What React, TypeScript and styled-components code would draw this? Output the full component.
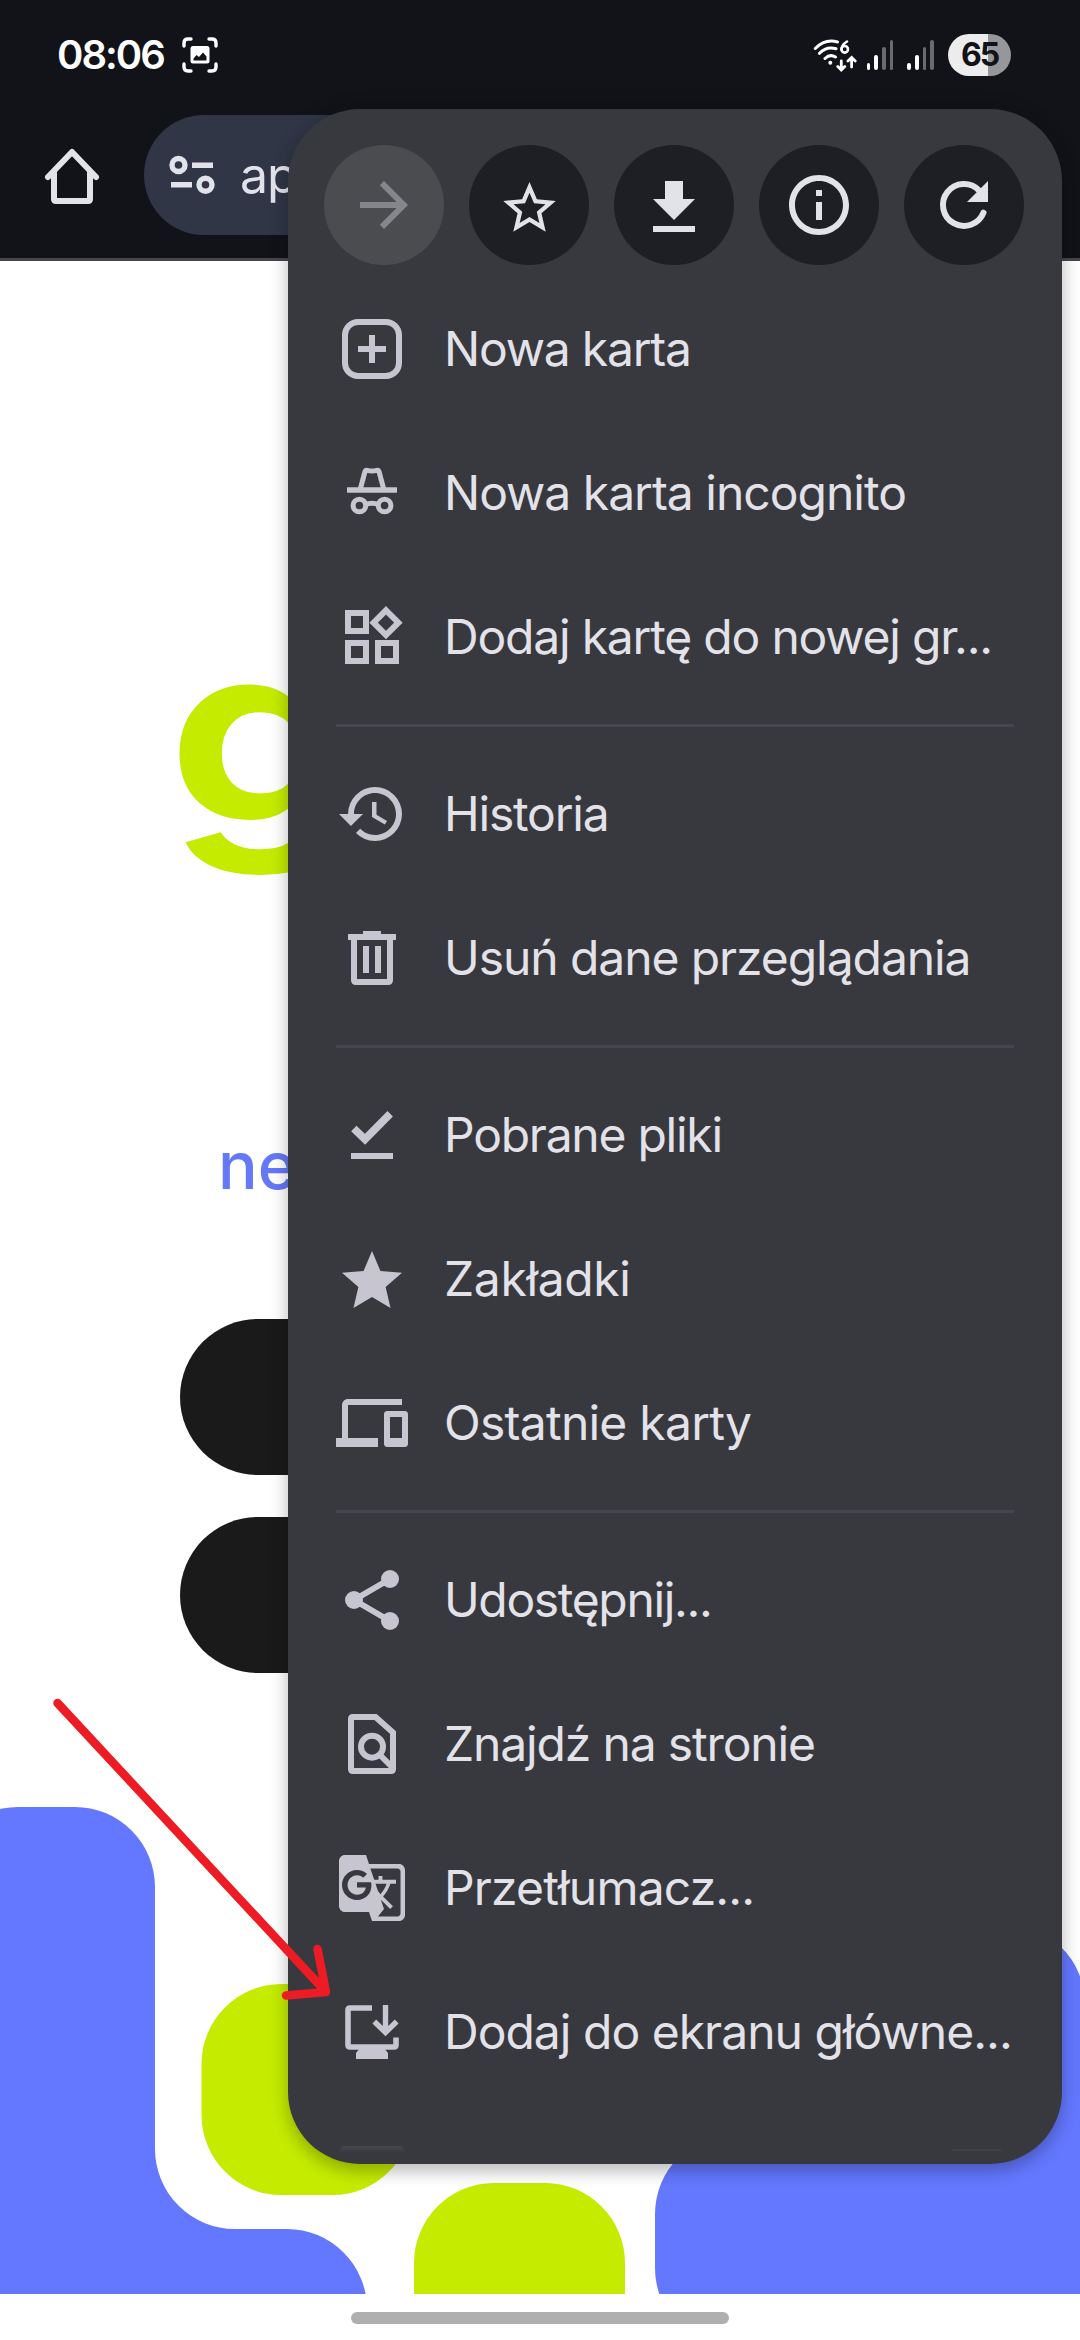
import React from "react";
import styled, { createGlobalStyle } from "styled-components";
import {
  MdArrowForward,
  MdDevices,
  MdGTranslate,
  MdHistory,
  MdInfoOutline,
  MdStar,
  MdStarBorder,
} from "react-icons/md";

const GlobalStyle = createGlobalStyle`
  * { box-sizing: border-box; }
  html, body { margin: 0; padding: 0; background: #fff; }
  body { font-family: Inter, Roboto, "Liberation Sans", sans-serif; overflow: hidden; }
  svg { display: block; flex: none; }
`;

const Screen = styled.div`
  position: relative;
  display: flex;
  flex-direction: column;
  width: 1080px;
  height: 2340px;
  overflow: hidden;
  background: #fff;
`;

/* ---------- status bar ---------- */

const StatusBar = styled.header`
  display: flex;
  align-items: center;
  height: 109px;
  padding: 1px 69px 0 57px;
  background: #121318;
`;

const Clock = styled.span`
  width: 125px;
  color: #fff;
  font-size: 40px;
  font-weight: 600;
  line-height: 48px;
  letter-spacing: -2px;
  white-space: nowrap;
`;

const StatusIcons = styled.div`
  display: flex;
  align-items: center;
  margin-left: auto;
`;

const SignalBars = styled.div`
  display: flex;
  align-items: flex-end;
  gap: 4px;
  height: 30px;
  margin-right: 14px;
`;

const SignalBar = styled.i<{ $height: number; $on: boolean }>`
  width: 3.7px;
  height: ${(p) => p.$height}px;
  border-radius: 2px;
  background: ${(p) => (p.$on ? "#fff" : "#6b6b6f")};
`;

const Battery = styled.div`
  display: flex;
  align-items: center;
  justify-content: center;
  width: 63px;
  height: 42px;
  border-radius: 21px;
  background: linear-gradient(90deg, #ececec 0 40px, #979799 40px);
  color: #121318;
  font-size: 32px;
  font-weight: 700;
  letter-spacing: -2px;
  line-height: 42px;
`;

/* ---------- browser toolbar ---------- */

const Toolbar = styled.div`
  display: flex;
  align-items: center;
  height: 152px;
  padding: 0 120px 17px 36px;
  border-bottom: 3px solid #46464d;
  background: #121318;
`;

const AddressBar = styled.div`
  display: flex;
  align-items: center;
  flex: 1;
  height: 120px;
  margin-left: 36px;
  padding-left: 24px;
  border-radius: 60px;
  background: #303646;
  color: #e2e2ea;
  font-size: 50px;
  line-height: 60px;
`;

const Address = styled.span`
  margin-left: 23px;
  font-weight: 400;
  letter-spacing: -1px;
`;

/* ---------- page behind the menu ---------- */

const WebPage = styled.main`
  display: flex;
  flex-direction: column;
  height: 2033px;
  padding-top: 324px;
  overflow: hidden;
  background: #fff;
`;

const Brand = styled.div`
  height: 441px;
  padding-left: 170px;
  color: #c4eb00;
  font-size: 245px;
  font-weight: 600;
  line-height: 294px;
  transform: scaleX(1.25);
  transform-origin: 180px 0;
  -webkit-text-stroke: 2px #c4eb00;
`;

const Tagline = styled.p`
  height: 292px;
  margin: 0;
  padding: 99px 0 0 218px;
  color: #6478f8;
  font-size: 66px;
  font-weight: 500;
  line-height: 80px;
`;

const StoreLinks = styled.div`
  display: flex;
  flex-direction: column;
  gap: 42px;
  padding: 1px 180px 0;
`;

const StoreLink = styled.div`
  height: 156px;
  border-radius: 78px;
  background: #1a1a1a;
`;

const Artwork = styled.svg`
  margin-top: 134px;
`;

const NavigationBar = styled.footer`
  display: flex;
  justify-content: center;
  height: 46px;
  padding-top: 18px;
  background: #fff;
`;

const GestureHandle = styled.div`
  width: 378px;
  height: 12px;
  border-radius: 6px;
  background: #afafaf;
`;

/* ---------- overflow menu ---------- */

const Menu = styled.nav`
  position: absolute;
  top: 109px;
  left: 288px;
  display: flex;
  flex-direction: column;
  width: 774px;
  height: 2055px;
  padding-top: 36px;
  border-radius: 72px;
  background: #38393e;
  box-shadow: 0 8px 16px rgba(0, 0, 0, 0.22), 0 0 24px rgba(0, 0, 0, 0.08);
`;

const QuickActions = styled.div`
  display: flex;
  justify-content: space-between;
  height: 132px;
  padding: 0 38px 0 36px;
`;

const QuickAction = styled.button<{ $disabled?: boolean }>`
  display: flex;
  align-items: center;
  justify-content: center;
  width: 120px;
  height: 120px;
  padding: 0;
  border: 0;
  border-radius: 50%;
  background: ${(p) => (p.$disabled ? "#4b4c50" : "#1e1f24")};
  color: ${(p) => (p.$disabled ? "#85868b" : "#e2e2e9")};
`;

const MenuRow = styled.div`
  display: flex;
  align-items: center;
  gap: 36px;
  height: 144px;
  padding-left: 48px;
  color: #c6c5d0;
`;

const MenuLabel = styled.span<{ $tracking: number }>`
  color: #e3e2e9;
  font-size: 48px;
  font-weight: 400;
  line-height: 60px;
  letter-spacing: ${(p) => p.$tracking}px;
  white-space: nowrap;
`;

const Divider = styled.hr`
  width: 678px;
  height: 3px;
  margin: 15px 0 15px 48px;
  border: 0;
  background: #46464f;
`;

const NextRow = styled.div`
  display: flex;
  justify-content: space-between;
  align-items: flex-start;
  margin: 42px 60px 0 51px;
`;

const NextIconEdge = styled.div`
  width: 66px;
  height: 6px;
  border-radius: 6px 6px 0 0;
  background: linear-gradient(#494a4f, #38393e);
`;

const NextToggleEdge = styled.div`
  width: 50px;
  height: 2px;
  margin-top: 3px;
  border-radius: 2px;
  background: #3f4045;
`;

const Annotation = styled.svg`
  position: absolute;
  top: 1690px;
  left: 45px;
`;

const Icon = ({ children }: { children: React.ReactNode }) => (
  <svg width="72" height="72" viewBox="0 0 72 72" fill="none" stroke="currentColor" strokeWidth="6">
    {children}
  </svg>
);

const NewTabIcon = () => (
  <Icon>
    <rect x="9" y="9" width="54" height="54" rx="13" />
    <path d="M36 22v28M22 36h28" />
  </Icon>
);

const IncognitoIcon = () => (
  <Icon>
    <path d="M11 33h50" strokeWidth="5.6" />
    <path
      d="M24.3 32l4.7-17.5q.6-1.7 2.3-1.2q4.7 1.4 9.4 0q1.7-.5 2.3 1.2L47.7 32"
      strokeWidth="5"
      strokeLinejoin="round"
    />
    <circle cx="23.4" cy="48.5" r="6.3" strokeWidth="5" />
    <circle cx="48.6" cy="48.5" r="6.3" strokeWidth="5" />
    <path d="M29 48q7-3.5 14 0" strokeWidth="5" />
  </Icon>
);

const TabGroupIcon = () => (
  <Icon>
    <rect x="12" y="12" width="18" height="18" />
    <rect x="12" y="42" width="18" height="18" />
    <rect x="42" y="42" width="18" height="18" />
    <path d="M50 9.3L62.4 21.7L50 34.1L37.6 21.7z" />
  </Icon>
);

const TrashIcon = () => (
  <Icon>
    <path d="M12 15h48" />
    <path d="M27 10.5h18" strokeWidth="3" />
    <path d="M18 15v43q0 2 2 2h32q2 0 2-2V15M30 24v27M42 24v27" />
  </Icon>
);

const DownloadsIcon = () => (
  <Icon>
    <path d="M15 57h42" />
    <path d="M17.8 29.5L29 40.3L54.2 14.8" strokeWidth="7.7" />
  </Icon>
);

const ShareIcon = () => (
  <Icon>
    <path d="M54 15L18 36L54 57" />
    <g fill="currentColor" stroke="none">
      <circle cx="54" cy="15" r="9" />
      <circle cx="18" cy="36" r="9" />
      <circle cx="54" cy="57" r="9" />
    </g>
  </Icon>
);

const FindIcon = () => (
  <Icon>
    <path d="M57 24.5V61q0 2-2 2H17q-2 0-2-2V11q0-2 2-2h22.5z" />
    <circle cx="36" cy="38.7" r="11" />
    <path d="M43.5 46.5L57 60" />
  </Icon>
);

const InstallIcon = () => (
  <Icon>
    <path d="M36 12H14q-2 0-2 2v35q0 2 2 2h44q2 0 2-2v-7.5" strokeWidth="5.6" />
    <path d="M24 52h24l4 5v6H20v-6z" fill="currentColor" stroke="none" />
    <path d="M49.5 9v27M38.3 25.5L49.5 36.5L60.7 25.5" strokeWidth="5.4" />
  </Icon>
);

const DownloadIcon = () => (
  <Icon>
    <path d="M27 12h18v18h12L36 51L15 30h12zM15 57h42v6H15z" fill="currentColor" stroke="none" />
  </Icon>
);

const ReloadIcon = () => (
  <Icon>
    <path d="M55.5 43.7A21 21 0 1 1 51 21.3" strokeLinecap="round" />
    <path d="M60 12v21H39z" fill="currentColor" stroke="none" />
  </Icon>
);

const HomeIcon = () => (
  <svg
    width="72"
    height="72"
    viewBox="0 0 72 72"
    fill="none"
    stroke="#e2e2e9"
    strokeWidth="6"
    strokeLinecap="round"
    strokeLinejoin="round"
  >
    <path d="M12 38L36 13L60 38" />
    <path d="M18 34v26q0 2 2 2h32q2 0 2-2V34" />
  </svg>
);

const SiteSettingsIcon = () => (
  <svg width="49" height="48" viewBox="168 151 49 48" fill="none" stroke="#e2e2ea" strokeWidth="5.4">
    <circle cx="178.5" cy="165" r="6.5" />
    <circle cx="205.5" cy="184.7" r="6.5" />
    <path d="M192 165.3h21M171 184.7h21" />
  </svg>
);

const ScreenshotIcon = () => (
  <svg width="36" height="36" viewBox="0 0 36 36" fill="none" stroke="#fff" strokeWidth="3.4" strokeLinecap="round">
    <path d="M2 9V6q0-4 4-4h3M27 2h3q4 0 4 4v3M34 27v3q0 4-4 4h-3M9 34H6q-4 0-4-4v-3" />
    <rect x="8.5" y="9" width="19" height="17.5" rx="2.5" fill="#fff" stroke="none" />
    <path d="M11.5 23.5v-2l3-3.5 2.5 2 4-4.5 3.5 4v4z" fill="#121318" stroke="none" />
  </svg>
);

const WifiSvg = styled.svg`
  margin-right: 10px;
`;

const WifiIcon = () => (
  <WifiSvg width="44" height="36" viewBox="812 37 44 36" fill="none" stroke="#fff" strokeWidth="3" strokeLinecap="round">
    <path d="M814.3 48.5Q824 38.5 836.5 42M818.5 53.3Q825.5 46 835 48.8M824 58.5Q829 53.6 834.5 57" />
    <circle cx="829.3" cy="62.8" r="2" fill="#fff" stroke="none" />
    <path d="M846 41.5Q840.5 45 840.5 49.5" strokeWidth="2.6" />
    <circle cx="843.7" cy="49.3" r="3.3" strokeWidth="2.6" />
    <path
      d="M840.3 61v8.5M836.8 66.5l3.5 3.5 3.5-3.5M850.6 67v-8.5M847 61l3.6-3.5 3.6 3.5"
      strokeWidth="2.8"
    />
  </WifiSvg>
);

const Signal = () => (
  <SignalBars>
    <SignalBar $height={7} $on />
    <SignalBar $height={15} $on />
    <SignalBar $height={23} $on={false} />
    <SignalBar $height={30} $on={false} />
  </SignalBars>
);

type Item = { label: string; icon: React.ReactNode; tracking: number };

const groups: Item[][] = [
  [
    { label: "Nowa karta", icon: <NewTabIcon />, tracking: -1.2 },
    { label: "Nowa karta incognito", icon: <IncognitoIcon />, tracking: -1.0 },
    { label: "Dodaj kartę do nowej gr...", icon: <TabGroupIcon />, tracking: -1.2 },
  ],
  [
    { label: "Historia", icon: <MdHistory size={72} />, tracking: -1.2 },
    { label: "Usuń dane przeglądania", icon: <TrashIcon />, tracking: -1.07 },
  ],
  [
    { label: "Pobrane pliki", icon: <DownloadsIcon />, tracking: -1.25 },
    { label: "Zakładki", icon: <MdStar size={72} viewBox="0 -0.7 24 24" />, tracking: -0.35 },
    { label: "Ostatnie karty", icon: <MdDevices size={72} />, tracking: -0.75 },
  ],
  [
    { label: "Udostępnij...", icon: <ShareIcon />, tracking: -1.35 },
    { label: "Znajdź na stronie", icon: <FindIcon />, tracking: -1.15 },
    { label: "Przetłumacz...", icon: <MdGTranslate size={72} />, tracking: -0.83 },
    { label: "Dodaj do ekranu główne...", icon: <InstallIcon />, tracking: -0.98 },
  ],
];

export default function App() {
  return (
    <Screen>
      <GlobalStyle />
      <StatusBar>
        <Clock>08:06</Clock>
        <ScreenshotIcon />
        <StatusIcons>
          <WifiIcon />
          <Signal />
          <Signal />
          <Battery>65</Battery>
        </StatusIcons>
      </StatusBar>
      <Toolbar>
        <HomeIcon />
        <AddressBar>
          <SiteSettingsIcon />
          <Address>ap</Address>
        </AddressBar>
      </Toolbar>
      <WebPage>
        <Brand>g</Brand>
        <Tagline>ne</Tagline>
        <StoreLinks>
          <StoreLink />
          <StoreLink />
        </StoreLinks>
        <Artwork width="1080" height="487" viewBox="0 1807 1080 487">
          <path
            d="M-62 1887a80 80 0 0 1 80-80h57a80 80 0 0 1 80 80v262a80 80 0 0 0 80 80h52a80 80 0 0 1 80 80h-500z"
            fill="#6478ff"
          />
          <rect x="201.5" y="1984" width="211" height="211" rx="80" fill="#c4eb00" />
          <rect x="414" y="2183" width="211" height="211" rx="80" fill="#c4eb00" />
          <path
            d="M655 2214a80 80 0 0 1 80-80h134v-130a80 80 0 0 1 80-80h56a80 80 0 0 1 80 80v344H735a80 80 0 0 1-80-80z"
            fill="#6478ff"
          />
        </Artwork>
      </WebPage>
      <NavigationBar>
        <GestureHandle />
      </NavigationBar>

      <Menu>
        <QuickActions>
          <QuickAction $disabled>
            <MdArrowForward size={72} />
          </QuickAction>
          <QuickAction>
            <MdStarBorder size={63} viewBox="0 -1 24 24" />
          </QuickAction>
          <QuickAction>
            <DownloadIcon />
          </QuickAction>
          <QuickAction>
            <MdInfoOutline size={72} />
          </QuickAction>
          <QuickAction>
            <ReloadIcon />
          </QuickAction>
        </QuickActions>
        {groups.map((items, i) => (
          <React.Fragment key={i}>
            {i > 0 && <Divider />}
            {items.map((item) => (
              <MenuRow key={item.label}>
                {item.icon}
                <MenuLabel $tracking={item.tracking}>{item.label}</MenuLabel>
              </MenuRow>
            ))}
          </React.Fragment>
        ))}
        <NextRow>
          <NextIconEdge />
          <NextToggleEdge />
        </NextRow>
      </Menu>

      <Annotation
        width="300"
        height="320"
        viewBox="45 1690 300 320"
        fill="none"
        stroke="#ed1c24"
        strokeWidth="8.5"
        strokeLinecap="round"
        strokeLinejoin="round"
      >
        <path d="M57.5 1703L326 1992M317.5 1949L326 1992L286 1995.5" />
      </Annotation>
    </Screen>
  );
}
